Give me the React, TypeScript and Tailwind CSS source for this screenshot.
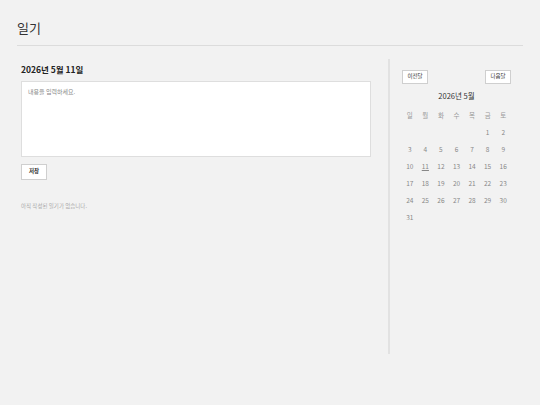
import { useState } from "react"

const weekdays = ["일", "월", "화", "수", "목", "금", "토"]

function buildDays(year: number, month: number) {
  const first = new Date(year, month, 1).getDay()
  const total = new Date(year, month + 1, 0).getDate()
  const cells: (number | null)[] = []
  for (let i = 0; i < first; i++) cells.push(null)
  for (let d = 1; d <= total; d++) cells.push(d)
  return cells
}

export default function App() {
  const [text, setText] = useState("")
  const [year, setYear] = useState(2026)
  const [month, setMonth] = useState(4)
  const selected = { year: 2026, month: 4, day: 11 }
  const days = buildDays(year, month)

  const prev = () => {
    if (month === 0) {
      setYear(year - 1)
      setMonth(11)
    } else setMonth(month - 1)
  }
  const next = () => {
    if (month === 11) {
      setYear(year + 1)
      setMonth(0)
    } else setMonth(month + 1)
  }

  return (
    <div
      className="min-h-screen bg-[#f2f2f2] px-[17px] pt-[18px] text-[#333]"
      style={{ fontFamily: '"Noto Sans CJK KR", "Noto Sans", sans-serif' }}
    >
      <header className="border-b border-[#dcdcdc] pb-[7px]">
        <h1 className="text-[13px] leading-[20px] font-normal text-[#333]">일기</h1>
      </header>
      <main className="mt-[13px] flex">
        <section className="flex-1 pl-[4px] pr-[17px] pt-[3px]">
          <h2 className="text-[8.5px] leading-[14px] font-bold text-[#222]">2026년 5월 11일</h2>
          <textarea
            value={text}
            onChange={(e) => setText(e.target.value)}
            placeholder="내용을 입력하세요."
            className="mt-[5px] block h-[76px] w-full resize-none border border-[#dedede] bg-white px-[6px] py-[5px] text-[6px] leading-[10px] text-[#333] placeholder:text-[#888] outline-none"
          />
          <button className="mt-[7px] block h-[16px] w-[26px] border border-[#cfcfcf] bg-white text-[5.5px] font-bold leading-none text-[#333]">
            저장
          </button>
          <p className="mt-[21px] text-[5.5px] leading-[10px] text-[#aaa]">아직 작성된 일기가 없습니다.</p>
        </section>
        <aside className="h-[295px] w-[135px] border-l-2 border-[#e2e2e2] pl-[12px] pr-[12px] pt-[11px]">
          <div className="flex justify-between">
            <button
              onClick={prev}
              className="h-[14px] w-[26px] border border-[#cfcfcf] bg-white text-[5.5px] leading-none text-[#333]"
            >
              이전달
            </button>
            <button
              onClick={next}
              className="h-[14px] w-[26px] border border-[#cfcfcf] bg-white text-[5.5px] leading-none text-[#333]"
            >
              다음달
            </button>
          </div>
          <div className="mt-[5px] text-center text-[7.5px] leading-[14px] text-[#333]">
            {year}년 {month + 1}월
          </div>
          <div className="mt-[4px] grid w-[109px] grid-cols-7">
            {weekdays.map((w) => (
              <div key={w} className="h-[17px] text-center text-[6.5px] leading-[17px] text-[#999]">
                {w}
              </div>
            ))}
            {days.map((d, i) => (
              <div key={i} className="h-[17px] text-center text-[6.5px] leading-[17px] text-[#888]">
                {d !== null && (
                  <span
                    className={
                      year === selected.year && month === selected.month && d === selected.day
                        ? "underline"
                        : ""
                    }
                  >
                    {d}
                  </span>
                )}
              </div>
            ))}
          </div>
        </aside>
      </main>
    </div>
  )
}
